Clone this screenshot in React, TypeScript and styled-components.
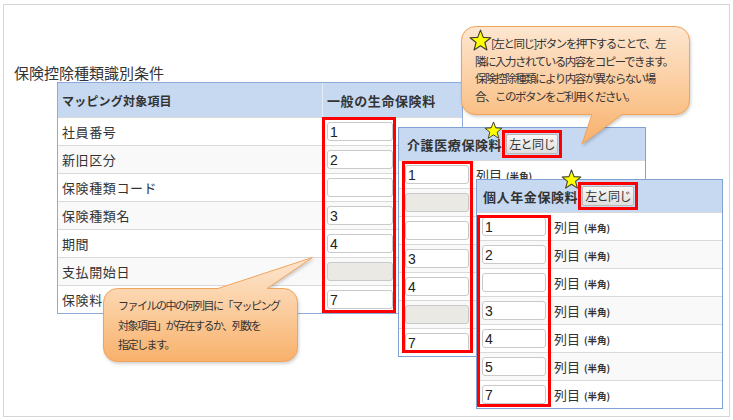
import styled, { createGlobalStyle } from "styled-components";

const GlobalStyle = createGlobalStyle`
  body {
    margin: 0;
    background: #fff;
    font-family: "Noto Sans CJK JP", "Liberation Sans", sans-serif;
    color: #333;
  }
`;

const Frame = styled.div`
  position: relative;
  box-sizing: border-box;
  width: 727px;
  height: 413px;
  margin: 4px 0 0 3px;
  padding: 59px 0 0 10px;
  border: 1px solid #d6d6d6;
  background: #fff;
`;

const Title = styled.div`
  font-size: 15px;
  line-height: 18px;
  color: #333;
`;

const Table = styled.div`
  box-sizing: border-box;
  width: 406px;
  margin-left: 43px;
  border: 1px solid #8eaadb;
  background: #fff;
`;

const Panel = styled.div<{ $left: number; $top: number; $width: number; $z: number }>`
  position: absolute;
  left: ${(p) => p.$left}px;
  top: ${(p) => p.$top}px;
  z-index: ${(p) => p.$z};
  box-sizing: border-box;
  width: ${(p) => p.$width}px;
  border: 1px solid #7fa1d4;
  background: #fff;
`;

const HeaderRow = styled.div<{ $cols: string }>`
  display: grid;
  grid-template-columns: ${(p) => p.$cols};
  height: 34px;
  background: #c6d9f1;
`;

const HeaderCell = styled.div<{ $pad: number; $size: number; $divider?: boolean }>`
  display: flex;
  align-items: center;
  padding-left: ${(p) => p.$pad}px;
  font-size: ${(p) => p.$size}px;
  font-weight: 700;
  letter-spacing: ${(p) => (p.$size > 12 ? "0.6px" : "0.2px")};
  color: #333;
  border-left: ${(p) => (p.$divider ? "1px solid #e4edf9" : "none")};
`;

const PanelHeader = styled.div<{ $pad: number }>`
  display: flex;
  align-items: center;
  height: 32px;
  padding-left: ${(p) => p.$pad}px;
  background: #c6d9f1;
  font-size: 13px;
  font-weight: 700;
  letter-spacing: 0.6px;
  color: #333;
`;

const ButtonFrame = styled.span`
  display: inline-flex;
  box-sizing: border-box;
  height: 28px;
  padding: 1px;
  border: 3px solid #ff0000;
  letter-spacing: 0;
`;

const SameButton = styled.button`
  height: 20px;
  padding: 0 2px;
  border: 1px solid #b9b9b9;
  border-radius: 2px;
  background: linear-gradient(#f8f8f8, #dedede);
  font-family: "Noto Sans CJK JP", sans-serif;
  font-size: 12px;
  font-weight: 400;
  letter-spacing: -0.6px;
  line-height: 18px;
  color: #333;
`;

const Body = styled.div`
  position: relative;
`;

const Row = styled.div<{ $cols: string; $alt: boolean }>`
  display: grid;
  grid-template-columns: ${(p) => p.$cols};
  align-items: center;
  box-sizing: border-box;
  height: 28px;
  border-top: 1px solid #d9d9d9;
  background: ${(p) => (p.$alt ? "#f9f9f9" : "#fff")};
`;

const Label = styled.div`
  padding-left: 4px;
  font-size: 13px;
  letter-spacing: 0.6px;
  white-space: nowrap;
`;

const InputCell = styled.div<{ $pad: number }>`
  display: flex;
  align-items: center;
  padding-left: ${(p) => p.$pad}px;
`;

const NumInput = styled.input<{ $width: number; $off: boolean }>`
  box-sizing: border-box;
  width: ${(p) => p.$width}px;
  height: 19px;
  padding: 0 2px;
  border: 1px solid #c9c9c9;
  border-radius: 3px;
  background: ${(p) => (p.$off ? "#ebe9e4" : "#fff")};
  font-family: "Liberation Sans", Arial, sans-serif;
  font-size: 14px;
  color: #222;
  outline: none;
`;

const ColText = styled.div`
  padding-left: 2px;
  font-size: 13px;
  white-space: nowrap;
  color: #333;
`;

const Half = styled.span`
  margin-left: 4px;
  font-size: 9.5px;
  font-weight: 700;
`;

const Highlight = styled.div<{ $left: number; $width: number; $top: number; $height: number }>`
  position: absolute;
  left: ${(p) => p.$left}px;
  top: ${(p) => p.$top}px;
  width: ${(p) => p.$width}px;
  height: ${(p) => p.$height}px;
  box-sizing: border-box;
  border: 3px solid #ff0000;
  pointer-events: none;
`;

const StarMark = styled.svg<{ $left: number; $top: number; $size: number }>`
  position: absolute;
  left: ${(p) => p.$left}px;
  top: ${(p) => p.$top}px;
  width: ${(p) => p.$size}px;
  height: ${(p) => p.$size}px;
  z-index: 6;
`;

const Bubble = styled.div<{ $left: number; $top: number; $w: number; $h: number; $z: number }>`
  position: absolute;
  left: ${(p) => p.$left}px;
  top: ${(p) => p.$top}px;
  width: ${(p) => p.$w}px;
  height: ${(p) => p.$h}px;
  z-index: ${(p) => p.$z};
`;

const BubbleArt = styled.svg`
  position: absolute;
  inset: 0;
  overflow: visible;
  filter: drop-shadow(1px 2px 1.5px rgba(0, 0, 0, 0.18));
`;

const BubbleText = styled.div<{ $pt: number; $pl: number; $lh: number; $size: number; $spacing: number }>`
  position: relative;
  padding: ${(p) => p.$pt}px 0 0 ${(p) => p.$pl}px;
  font-size: ${(p) => p.$size}px;
  line-height: ${(p) => p.$lh}px;
  letter-spacing: ${(p) => p.$spacing}px;
  white-space: nowrap;
  color: #333;
`;

const FirstLine = styled.span`
  padding-left: 16px;
`;

type Cell = { v: string; off?: boolean };

const mainRows: { label: string; cell: Cell }[] = [
  { label: "社員番号", cell: { v: "1" } },
  { label: "新旧区分", cell: { v: "2" } },
  { label: "保険種類コード", cell: { v: "" } },
  { label: "保険種類名", cell: { v: "3" } },
  { label: "期間", cell: { v: "4" } },
  { label: "支払開始日", cell: { v: "", off: true } },
  { label: "保険料", cell: { v: "7" } },
];

const careRows: Cell[] = [
  { v: "1" },
  { v: "", off: true },
  { v: "" },
  { v: "3" },
  { v: "4" },
  { v: "", off: true },
  { v: "7" },
];

const pensionRows: Cell[] = [
  { v: "1" },
  { v: "2" },
  { v: "" },
  { v: "3" },
  { v: "4" },
  { v: "5" },
  { v: "7" },
];

function Star({ left, top, size }: { left: number; top: number; size: number }) {
  return (
    <StarMark $left={left} $top={top} $size={size} viewBox="0 0 24 24">
      <polygon
        points="12,1.2 14.9,8.7 22.8,9.1 16.6,14.1 18.7,21.9 12,17.5 5.3,21.9 7.4,14.1 1.2,9.1 9.1,8.7"
        fill="#ffff00"
        stroke="#3f3f30"
        strokeWidth="1.2"
        strokeLinejoin="round"
      />
    </StarMark>
  );
}

function Gradient({ id }: { id: string }) {
  return (
    <defs>
      <linearGradient id={id} x1="0" y1="0" x2="0" y2="1">
        <stop offset="0" stopColor="#fde6d0" />
        <stop offset="0.5" stopColor="#fbcd9f" />
        <stop offset="1" stopColor="#f8b16b" />
      </linearGradient>
    </defs>
  );
}

function ColumnPanel({
  title,
  rows,
  left,
  top,
  width,
  z,
  headPad,
  inputCol,
  inputPad,
  box,
  star,
  textRows,
}: {
  title: string;
  rows: Cell[];
  left: number;
  top: number;
  width: number;
  z: number;
  headPad: number;
  inputCol: number;
  inputPad: number;
  box: { left: number; width: number; top: number };
  star: { left: number; top: number; size: number };
  textRows: number;
}) {
  const cols = `${inputCol}px 1fr`;
  return (
    <Panel $left={left} $top={top} $width={width} $z={z}>
      <PanelHeader $pad={headPad}>
        {title}
        <ButtonFrame>
          <SameButton>左と同じ</SameButton>
        </ButtonFrame>
      </PanelHeader>
      <Body>
        {rows.map((r, i) => (
          <Row key={i} $cols={cols} $alt={i % 2 === 1}>
            <InputCell $pad={inputPad}>
              <NumInput $width={64} $off={!!r.off} value={r.v} readOnly />
            </InputCell>
            {i < textRows && (
              <ColText>
                列目<Half>(半角)</Half>
              </ColText>
            )}
          </Row>
        ))}
        <Highlight $left={box.left} $width={box.width} $top={box.top} $height={192} />
      </Body>
      <Star left={star.left} top={star.top} size={star.size} />
    </Panel>
  );
}

export default function App() {
  const mainCols = "264px 1fr";
  return (
    <>
      <GlobalStyle />
      <Frame>
        <Title>保険控除種類識別条件</Title>
        <Table>
          <HeaderRow $cols={mainCols}>
            <HeaderCell $pad={4} $size={12}>
              マッピング対象項目
            </HeaderCell>
            <HeaderCell $pad={4} $size={13} $divider>
              一般の生命保険料
            </HeaderCell>
          </HeaderRow>
          <Body>
            {mainRows.map((r, i) => (
              <Row key={r.label} $cols={mainCols} $alt={i % 2 === 1}>
                <Label>{r.label}</Label>
                <InputCell $pad={5}>
                  <NumInput $width={66} $off={!!r.cell.off} value={r.cell.v} readOnly />
                </InputCell>
              </Row>
            ))}
            <Highlight $left={264} $width={74} $top={0} $height={196} />
          </Body>
        </Table>

        <ColumnPanel
          title="介護医療保険料"
          rows={careRows}
          left={394}
          top={122}
          width={248}
          z={1}
          headPad={8}
          inputCol={75}
          inputPad={6}
          box={{ left: 3, width: 71, top: 1 }}
          star={{ left: 85, top: -7, size: 19 }}
          textRows={1}
        />

        <ColumnPanel
          title="個人年金保険料"
          rows={pensionRows}
          left={472}
          top={174}
          width={247}
          z={2}
          headPad={6}
          inputCol={75}
          inputPad={5}
          box={{ left: 0, width: 74, top: 3 }}
          star={{ left: 84, top: -11, size: 21 }}
          textRows={7}
        />

        <Bubble $left={99} $top={252} $w={211} $h={106} $z={3}>
          <BubbleArt width="211" height="106" viewBox="0 0 211 106">
            <Gradient id="gradLow" />
            <path
              d="M14.5,31.5 H115 L209.5,0.5 L164,31.5 H180.5 A14,14 0 0 1 194.5,45.5 V90.5 A14,14 0 0 1 180.5,104.5 H14.5 A14,14 0 0 1 0.5,90.5 V45.5 A14,14 0 0 1 14.5,31.5 Z"
              fill="url(#gradLow)"
              stroke="#f2a35a"
              strokeWidth="1"
            />
          </BubbleArt>
          <BubbleText $pt={39} $pl={15} $lh={19.5} $size={11} $spacing={-1.5}>
            ファイルの中の何列目に「マッピング
            <br />
            対象項目」が存在するか、列数を
            <br />
            指定します。
          </BubbleText>
        </Bubble>

        <Bubble $left={457} $top={21} $w={231} $h={120} $z={4}>
          <BubbleArt width="231" height="120" viewBox="0 0 231 120">
            <Gradient id="gradTop" />
            <path
              d="M14.5,0.5 H214.5 A14,14 0 0 1 228.5,14.5 V74.5 A14,14 0 0 1 214.5,88.5 H161 L121,118 L131,88.5 H14.5 A14,14 0 0 1 0.5,74.5 V14.5 A14,14 0 0 1 14.5,0.5 Z"
              fill="url(#gradTop)"
              stroke="#f2a35a"
              strokeWidth="1"
            />
          </BubbleArt>
          <Star left={8} top={3} size={23} />
          <BubbleText $pt={9} $pl={14} $lh={17.7} $size={11.5} $spacing={-1.5}>
            <FirstLine>[左と同じ]ボタンを押下することで、左</FirstLine>
            <br />
            隣に入力されている内容をコピーできます。
            <br />
            保険控除種類により内容が異ならない場
            <br />
            合、このボタンをご利用ください。
          </BubbleText>
        </Bubble>
      </Frame>
    </>
  );
}
